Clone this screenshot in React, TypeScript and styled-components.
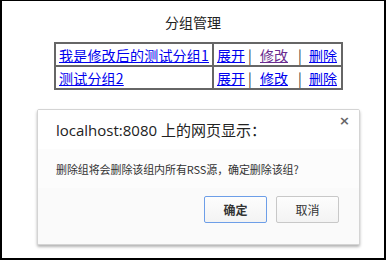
import styled, { createGlobalStyle } from "styled-components";

const GlobalStyle = createGlobalStyle`
  html, body {
    margin: 0;
    padding: 0;
    background: #fff;
  }
  body {
    font-family: "Noto Sans CJK SC", sans-serif;
  }
`;

const Frame = styled.div`
  position: relative;
  width: 386px;
  height: 260px;
  box-sizing: border-box;
  border: 2px solid #000;
  border-top-width: 1px;
  overflow: hidden;
`;

const Title = styled.div`
  padding-top: 11px;
  text-align: center;
  font-size: 14px;
  line-height: 20px;
  color: #222;
`;

const Table = styled.table`
  margin: 10px 0 0 52px;
  border-collapse: collapse;
  font-size: 14px;
  & td {
    border: 2px solid #666;
    padding: 0 3px;
    height: 21px;
    line-height: 18px;
    white-space: nowrap;
  }
  & td:first-child {
    letter-spacing: 0.2px;
  }
  & td:last-child {
    padding-right: 4px;
  }
`;

const Link = styled.a<{ $visited?: boolean }>`
  color: ${(p) => (p.$visited ? "#6b2c8f" : "#0000ee")};
  text-decoration: underline;
  cursor: pointer;
`;

const Sep = styled.span<{ $w: number; $lead: number }>`
  display: inline-block;
  width: ${(p) => p.$w}px;
  padding-left: ${(p) => p.$lead}px;
  box-sizing: border-box;
  color: #333;
`;

const Dialog = styled.div`
  position: absolute;
  left: 35px;
  top: 108px;
  width: 321px;
  height: 134px;
  border: 1px solid #d4d4d4;
  border-radius: 2px;
  box-shadow: 0 2px 3px rgba(0, 0, 0, 0.3);
  background: #fff;
  display: flex;
  flex-direction: column;
  overflow: hidden;
`;

const Header = styled.div`
  position: relative;
  height: 39px;
  display: flex;
  align-items: center;
  padding: 0 0 0 18px;
  font-family: "Open Sans", "Noto Sans CJK SC", sans-serif;
  font-size: 15px;
  color: #222;
  background: #fff;
`;

const Close = styled.span`
  position: absolute;
  right: 9px;
  top: 3px;
  font-family: "DejaVu Sans", sans-serif;
  font-size: 13px;
  font-weight: bold;
  color: #666;
`;

const Body = styled.div`
  height: 39px;
  display: flex;
  align-items: center;
  padding-left: 18px;
  font-size: 11px;
  color: #333;
  background: #fcfcfc;
  letter-spacing: -0.1px;
`;

const Footer = styled.div`
  flex: 1;
  display: flex;
  justify-content: flex-end;
  align-items: flex-start;
  gap: 9px;
  padding: 8px 20px 0 0;
  background: #fafafa;
`;

const Button = styled.button<{ $primary?: boolean }>`
  width: 63px;
  height: 27px;
  box-sizing: border-box;
  border: 1px solid ${(p) => (p.$primary ? "#6d9ee8" : "#c8c8c8")};
  border-radius: 2px;
  background: linear-gradient(#fdfdfd, #f3f3f3);
  font-family: "Noto Sans CJK SC", sans-serif;
  font-size: 12px;
  font-weight: ${(p) => (p.$primary ? "bold" : "normal")};
  color: #333;
  padding: 0;
`;

export default function App() {
  return (
    <>
      <GlobalStyle />
      <Frame>
        <Title>分组管理</Title>
        <Table>
          <tbody>
            <tr>
              <td>
                <Link>我是修改后的测试分组1</Link>
              </td>
              <td>
                <Link>展开</Link>
                <Sep $w={15} $lead={3}>|</Sep>
                <Link $visited>修改</Link>
                <Sep $w={21} $lead={10}>|</Sep>
                <Link>删除</Link>
              </td>
            </tr>
            <tr>
              <td>
                <Link>测试分组2</Link>
              </td>
              <td>
                <Link>展开</Link>
                <Sep $w={15} $lead={3}>|</Sep>
                <Link>修改</Link>
                <Sep $w={21} $lead={10}>|</Sep>
                <Link>删除</Link>
              </td>
            </tr>
          </tbody>
        </Table>
        <Dialog>
          <Header>
            localhost:8080 上的网页显示：
            <Close>×</Close>
          </Header>
          <Body>删除组将会删除该组内所有RSS源，确定删除该组?</Body>
          <Footer>
            <Button $primary>确定</Button>
            <Button>取消</Button>
          </Footer>
        </Dialog>
      </Frame>
    </>
  );
}
